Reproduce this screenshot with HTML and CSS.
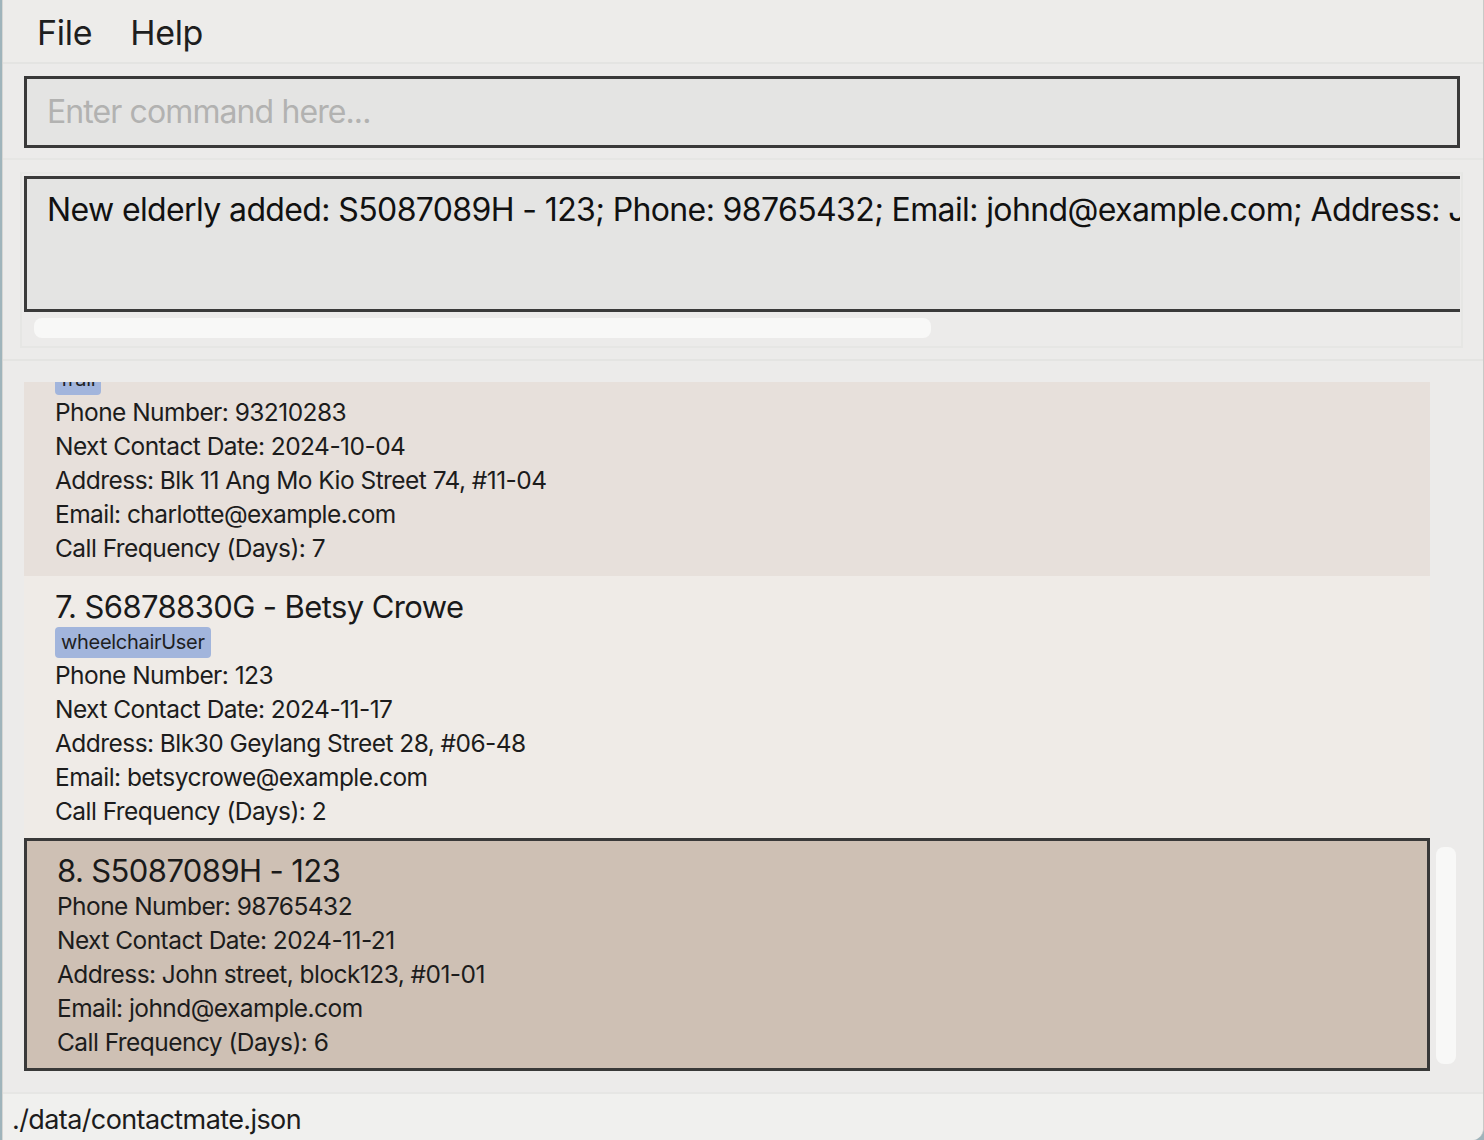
FILE: index.html
```html
<!DOCTYPE html>
<html>
<head>
<meta charset="utf-8">
<link rel="stylesheet" href="styles.css">
</head>
<body>
<div class="window">
  <div class="menubar">
    <span class="menu-item">File</span>
    <span class="menu-item">Help</span>
  </div>
  <div class="command-area">
    <div class="command-box"><span class="placeholder">Enter command here...</span></div>
  </div>
  <div class="result-area">
    <div class="result-panel">
      <div class="result-box">
        <div class="result-text">New elderly added: S5087089H - 123; Phone: 98765432; Email: johnd@example.com; Address: John street, block123, #01-01; Next Contact Date: 2024-11-21</div>
      </div>
      <div class="hscroll"><div class="hthumb"></div></div>
    </div>
  </div>
  <div class="list-area">
    <div class="list">
      <div class="card card-a partial">
        <div class="tag-clip"><span class="tag">frail</span></div>
        <div class="line">Phone Number: 93210283</div>
        <div class="line">Next Contact Date: 2024-10-04</div>
        <div class="line">Address: Blk 11 Ang Mo Kio Street 74, #11-04</div>
        <div class="line">Email: charlotte@example.com</div>
        <div class="line">Call Frequency (Days): 7</div>
      </div>
      <div class="card card-b">
        <div class="title">7. S6878830G - Betsy Crowe</div>
        <div class="tags"><span class="tag">wheelchairUser</span></div>
        <div class="line">Phone Number: 123</div>
        <div class="line">Next Contact Date: 2024-11-17</div>
        <div class="line">Address: Blk30 Geylang Street 28, #06-48</div>
        <div class="line">Email: betsycrowe@example.com</div>
        <div class="line">Call Frequency (Days): 2</div>
      </div>
      <div class="card card-sel">
        <div class="title">8. S5087089H - 123</div>
        <div class="line">Phone Number: 98765432</div>
        <div class="line">Next Contact Date: 2024-11-21</div>
        <div class="line">Address: John street, block123, #01-01</div>
        <div class="line">Email: johnd@example.com</div>
        <div class="line">Call Frequency (Days): 6</div>
      </div>
    </div>
    <div class="vscroll"><div class="vthumb"></div></div>
  </div>
  <div class="status">./data/contactmate.json</div>
</div>
</body>
</html>
```
FILE: styles.css
```css
* { box-sizing: border-box; }
html, body {
  margin: 0;
  padding: 0;
  background: #9fb4bb;
}
body {
  font-family: Inter, "Noto Sans", sans-serif;
  color: #1c1c1c;
  width: 1484px;
  height: 1140px;
  overflow: hidden;
}
.window {
  width: 1482px;
  height: 1140px;
  margin-left: 2px;
  background: #ecebea;
  border-left: 1px solid #d6d6d4;
  border-right: 1px solid #c9c9c7;
  border-bottom-right-radius: 12px;
  display: flex;
  flex-direction: column;
  overflow: hidden;
}
.menubar {
  height: 64px;
  flex: none;
  display: flex;
  align-items: center;
  gap: 38px;
  padding-left: 34px;
  padding-top: 3px;
  border-bottom: 2px solid #e4e4e2;
  background: #edecea;
}
.menu-item {
  font-size: 34px;
  letter-spacing: -0.3px;
  color: #1e1e1e;
}
.command-area {
  flex: none;
  padding: 12px 23px 10px 21px;
  border-bottom: 2px solid #e6e6e4;
}
.command-box {
  height: 72px;
  border: 3px solid #393939;
  background: #e4e4e3;
  display: flex;
  align-items: center;
  padding-left: 20px;
}
.placeholder {
  font-size: 32px;
  letter-spacing: -0.9px;
  color: #b2b2b1;
  padding-bottom: 2px;
}
.result-area {
  flex: none;
  padding: 12px 20px 11px 17px;
  border-bottom: 2px solid #e4e4e2;
}
.result-panel {
  border: 2px solid #e6e6e4;
  border-top-color: #e8e8e6;
  padding: 2px 1px 8px 2px;
  background: #ecebea;
}
.result-box {
  height: 136px;
  border: 3px solid #3a3a3a;
  border-right: none;
  background: #e4e4e3;
  overflow: hidden;
  padding: 11px 0 0 20px;
}
.result-text {
  white-space: nowrap;
  font-size: 32px;
  letter-spacing: -0.62px;
  color: #111;
}
.hscroll {
  height: 20px;
  margin-top: 6px;
  padding-left: 10px;
}
.hthumb {
  width: 897px;
  height: 20px;
  background: #f8f8f7;
  border-radius: 8px;
}
.list-area {
  flex: 1;
  min-height: 0;
  display: flex;
  padding: 21px 0 0 21px;
  overflow: hidden;
  border-bottom: 2px solid #e6e6e4;
}
.list {
  width: 1406px;
  flex: none;
  display: flex;
  flex-direction: column;
}
.vscroll {
  width: 34px;
  flex: none;
  height: 690px;
  display: flex;
  flex-direction: column;
  justify-content: flex-end;
  padding: 0 6px 8px 6px;
}
.vthumb {
  width: 20px;
  height: 217px;
  background: #f8f8f7;
  border-radius: 8px;
}
.card {
  flex: none;
  padding: 13px 0 10px 31px;
  font-size: 24.5px;
  letter-spacing: -0.55px;
}
.card-a { background: #e7e0db; }
.card-b { background: #efebe7; }
.card-sel {
  background: #cec0b4;
  border: 3px solid #393939;
  padding: 12px 0 9px 30px;
}
.partial { padding-top: 0; padding-bottom: 11px; }
.title {
  font-size: 31px;
  line-height: 36px;
  letter-spacing: -0.6px;
  color: #1a1a1a;
}
.line {
  line-height: 34px;
  color: #1c1c1c;
}
.tags {
  margin-top: 2px;
  height: 31px;
  display: flex;
}
.tag-clip {
  height: 13px;
  overflow: hidden;
  display: flex;
  align-items: flex-end;
}
.tag {
  display: inline-block;
  flex: none;
  background: #a2b5dc;
  color: #1f1f1f;
  font-size: 20px;
  line-height: 31px;
  height: 31px;
  padding: 0 6px;
  border-radius: 4px;
  letter-spacing: -0.3px;
}
.status {
  flex: none;
  height: 46px;
  background: #f0f0ee;
  font-size: 27px;
  letter-spacing: -0.6px;
  padding-left: 9px;
  padding-top: 5px;
  display: flex;
  align-items: center;
  color: #1c1c1c;
}
```
